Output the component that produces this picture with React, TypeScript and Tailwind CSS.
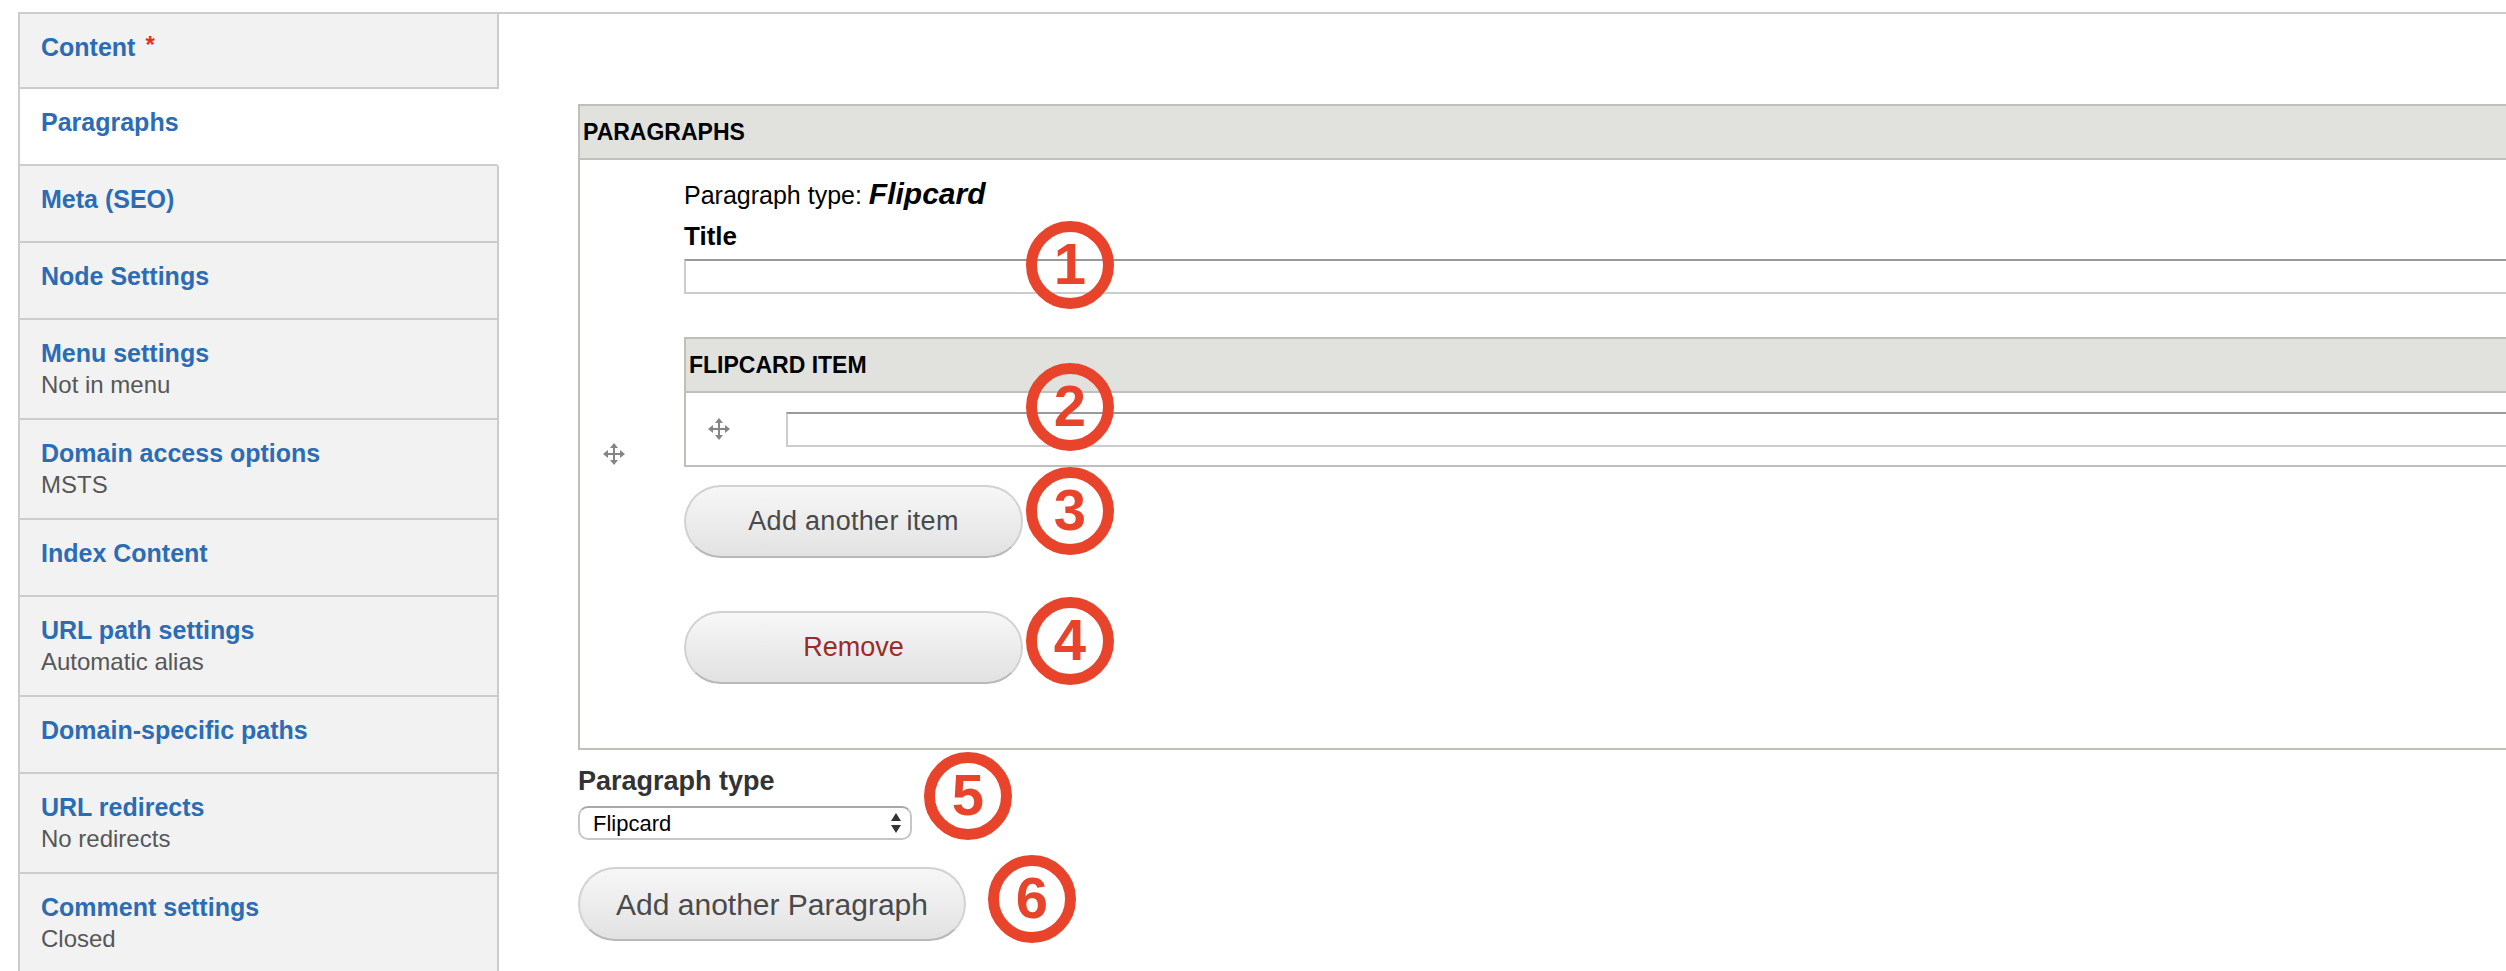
import React from "react";

type Tab = {
  title: string;
  summary?: string;
  required?: boolean;
  active?: boolean;
};

const tabs: Tab[] = [
  { title: "Content", required: true },
  { title: "Paragraphs", active: true },
  { title: "Meta (SEO)" },
  { title: "Node Settings" },
  { title: "Menu settings", summary: "Not in menu" },
  { title: "Domain access options", summary: "MSTS" },
  { title: "Index Content" },
  { title: "URL path settings", summary: "Automatic alias" },
  { title: "Domain-specific paths" },
  { title: "URL redirects", summary: "No redirects" },
  { title: "Comment settings", summary: "Closed" },
];

function DragHandle() {
  return (
    <svg width="24" height="24" viewBox="0 0 24 24" className="block">
      <g fill="#858585">
        <rect x="11" y="5" width="2" height="14" />
        <rect x="5" y="11" width="14" height="2" />
        <polygon points="12,1 8,6 16,6" />
        <polygon points="12,23 8,18 16,18" />
        <polygon points="1,12 6,8 6,16" />
        <polygon points="23,12 18,8 18,16" />
      </g>
    </svg>
  );
}

function Marker({ n, left, top }: { n: number; left: number; top: number }) {
  return (
    <div
      className="absolute flex h-[88px] w-[88px] items-center justify-center rounded-full border-[11px] border-[#e8432b] font-['Liberation_Sans',Arial,sans-serif] text-[58px] font-bold leading-none text-[#e8432b]"
      style={{ left, top }}
    >
      <span className="-mt-[2px]">{n}</span>
    </div>
  );
}

function PillButton({ label, danger, big }: { label: string; danger?: boolean; big?: boolean }) {
  return (
    <div
      className={
        "flex items-center justify-center rounded-full border-2 border-[#d2d2d2] border-b-[#b8b8b8] bg-gradient-to-b from-[#f7f7f7] to-[#e2e2e2] " +
        (big ? "h-[74px] w-[388px] text-[30px] text-[#4a4a4a]" : "h-[73px] w-[339px] text-[27px] ") +
        (!big && danger ? "text-[#9a2b26]" : !big ? "text-[#4a4a4a] tracking-[0.3px]" : "")
      }
    >
      {label}
    </div>
  );
}

function TableHeader({ label }: { label: string }) {
  return (
    <div className="flex h-[54px] items-center border-b-2 border-[#c0c0bc] bg-[#e1e1dd] pl-[3px] text-[23px] font-bold text-black">
      {label}
    </div>
  );
}

export default function App() {
  return (
    <div className="relative h-[971px] w-full overflow-hidden bg-white font-['Liberation_Sans',Arial,sans-serif]">
      <div className="ml-[18px] mt-[12px] flex border-t-2 border-[#cccccc]">
        {/* vertical tabs */}
        <div className="w-[481px] shrink-0">
          {tabs.map((t, i) => (
            <div
              key={t.title}
              className={
                "border-b-2 border-l-2 border-r-2 border-[#cccccc] pl-[21px] pt-[18px] " +
                (t.summary ? "pb-[20px] " : i === 0 ? "pb-[24px] " : "pb-[27px] ") +
                (t.active ? "border-r-white bg-white" : "bg-[#f2f2f2]")
              }
            >
              <div className="text-[25px] font-bold leading-[30px] text-[#2b6cb5]">
                {t.title}
                {t.required && (
                  <span className="relative -top-[3px] ml-[10px] text-[24px] text-[#e0301e]">*</span>
                )}
              </div>
              {t.summary && (
                <div className="mt-[4px] text-[24px] leading-[26px] text-[#575757]">{t.summary}</div>
              )}
            </div>
          ))}
          <div className="h-[80px] border-l-2 border-r-2 border-[#cccccc] bg-[#f2f2f2]" />
        </div>

        {/* main pane */}
        <div className="min-w-0 flex-1 pl-[79px] pt-[90px]">
          <div className="w-[2000px] border-2 border-[#bfbfbb]">
            <TableHeader label="PARAGRAPHS" />
            <div className="flex">
              <div className="flex w-[104px] shrink-0 items-center pl-[22px]">
                <DragHandle />
              </div>
              <div className="min-w-0 flex-1 pb-[64px] pt-[16px]">
                <div className="flex items-baseline leading-[36px] text-black">
                  <span className="text-[25px]">Paragraph type:&nbsp;</span>
                  <span className="text-[30px] font-bold italic">Flipcard</span>
                </div>
                <div className="mt-[8px] text-[26px] font-bold leading-[30px] text-black">Title</div>
                <input
                  readOnly
                  className="mt-[8px] block h-[35px] w-full border-2 border-[#cccccc] border-t-[#999999] bg-white outline-none"
                />

                <div className="mt-[43px] border-2 border-[#bfbfbb]">
                  <TableHeader label="FLIPCARD ITEM" />
                  <div className="flex h-[72px] items-center">
                    <div className="flex w-[66px] shrink-0 items-center justify-center">
                      <DragHandle />
                    </div>
                    <div className="min-w-0 flex-1 pl-[34px]">
                      <input
                        readOnly
                        className="block h-[35px] w-full border-2 border-[#cccccc] border-t-[#999999] bg-white outline-none"
                      />
                    </div>
                  </div>
                </div>

                <div className="mt-[18px]">
                  <PillButton label="Add another item" />
                </div>
                <div className="mt-[53px]">
                  <PillButton label="Remove" danger />
                </div>
              </div>
            </div>
          </div>

          <div className="mt-[15px] text-[27px] font-bold leading-[32px] text-[#333333]">Paragraph type</div>
          <div className="mt-[9px] flex h-[34px] w-[334px] items-center justify-between rounded-[10px] border-2 border-[#c6c6c6] border-t-[#a9a9a9] bg-white pl-[13px] pr-[9px] text-[22px] text-black">
            <span>Flipcard</span>
            <svg width="10" height="22" viewBox="0 0 10 22">
              <polygon points="5,1 0,9 10,9" fill="#333333" />
              <polygon points="5,21 0,13 10,13" fill="#333333" />
            </svg>
          </div>
          <div className="mt-[27px]">
            <PillButton label="Add another Paragraph" big />
          </div>
        </div>
      </div>

      <Marker n={1} left={1026} top={221} />
      <Marker n={2} left={1026} top={363} />
      <Marker n={3} left={1026} top={467} />
      <Marker n={4} left={1026} top={597} />
      <Marker n={5} left={924} top={752} />
      <Marker n={6} left={988} top={855} />
    </div>
  );
}
